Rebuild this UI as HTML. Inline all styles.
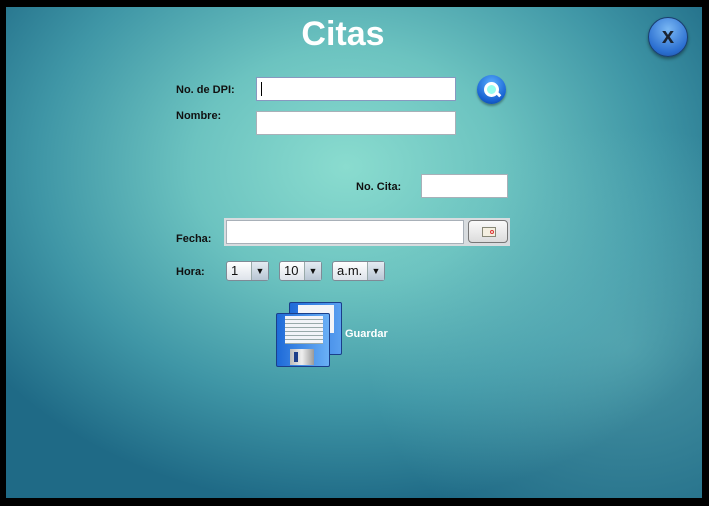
<!DOCTYPE html><html><head><style>
body{margin:0;width:709px;height:506px;background:#000;position:relative;overflow:hidden;font-family:"Liberation Sans",sans-serif}
#bg{position:absolute;left:6px;top:7px;width:696px;height:491px;background:radial-gradient(ellipse 440px 340px at 340px 160px,#8adccf 0%,#6cc3c0 35%,#3f96a6 70%,#1f6a86 100%),#1a5e7e;overflow:hidden}
#bg2{position:absolute;left:0;top:0;width:696px;height:491px;background:radial-gradient(ellipse 260px 220px at 620px 340px,rgba(120,200,200,.45),rgba(0,0,0,0));}
.l{position:absolute;font-size:11px;font-weight:bold;color:#111}
.in{position:absolute;background:#fff;border:1px solid #a8b0b8;box-sizing:border-box}
.cb{position:absolute;height:20px;border:1px solid #7f8a96;border-radius:3px;background:linear-gradient(#fff,#dde3ea);box-sizing:border-box;font-size:13px;line-height:18px;padding-left:4px;color:#111}
.cb i{position:absolute;right:0;top:0;width:16px;height:18px;border-left:1px solid #9aa;background:linear-gradient(#e4ebf2,#b8c6d4);font-style:normal;font-size:9px;text-align:center;line-height:18px}
</style></head><body>
<div id="bg"><div id="bg2"></div></div>
<div style="position:absolute;left:0;width:686px;top:15px;text-align:center;color:#fff;font-weight:bold;font-size:34px">Citas</div>
<div style="position:absolute;left:648px;top:17px;width:38px;height:38px;border-radius:50%;background:radial-gradient(circle at 50% 30%,#7ab8f4,#2a6ed0 70%,#1d4e9a);border:1px solid #1a3e70;box-shadow:0 2px 3px rgba(0,0,0,.4);text-align:center;line-height:36px;font-weight:bold;font-size:22px;color:#1a2330">x</div>
<div class="l" style="left:176px;top:84px">No. de DPI:</div>
<div class="in" style="left:256px;top:77px;width:200px;height:24px;border-color:#8898c0"><div style="position:absolute;left:4px;top:4px;width:1px;height:14px;background:#000"></div></div>
<div style="position:absolute;left:477px;top:75px;width:29px;height:29px;border-radius:50%;background:radial-gradient(circle at 50% 30%,#5ab0ff,#1660d0 70%,#0b3c8c);box-shadow:0 2px 2px rgba(0,0,0,.35)"><div style="position:absolute;left:7px;top:7px;width:9px;height:9px;border:3px solid #fff;border-radius:50%;background:#9fe"></div><div style="position:absolute;left:19px;top:18px;width:5px;height:3px;background:#fff;transform:rotate(45deg)"></div></div>
<div class="l" style="left:176px;top:110px">Nombre:</div>
<div class="in" style="left:256px;top:111px;width:200px;height:24px"></div>
<div class="l" style="left:356px;top:181px">No. Cita:</div>
<div class="in" style="left:421px;top:174px;width:87px;height:24px"></div>
<div style="position:absolute;left:224px;top:218px;width:286px;height:28px;background:#d8dcdf"></div>
<div class="in" style="left:226px;top:220px;width:238px;height:24px"></div>
<div style="position:absolute;left:468px;top:220px;width:40px;height:23px;border:1px solid #777;border-radius:4px;background:linear-gradient(#fafafa,#dcdcdc);box-sizing:border-box"><div style="position:absolute;left:13px;top:6px;width:12px;height:8px;border:1px solid #887;background:#f4efe0"><div style="position:absolute;right:1px;top:2px;width:4px;height:4px;border:1px solid #d33;border-radius:50%;box-sizing:border-box"></div></div></div>
<div class="l" style="left:176px;top:233px">Fecha:</div>
<div class="l" style="left:176px;top:266px">Hora:</div>
<div class="cb" style="left:226px;top:261px;width:43px">1<i>▼</i></div>
<div class="cb" style="left:279px;top:261px;width:43px">10<i>▼</i></div>
<div class="cb" style="left:332px;top:261px;width:53px">a.m.<i>▼</i></div>
<div style="position:absolute;left:289px;top:302px;width:51px;height:51px;background:linear-gradient(90deg,#1e6ad8,#5aa0f0);border:1px solid #1a3f8a;border-radius:2px"><div style="position:absolute;left:8px;top:2px;width:36px;height:28px;background:#f2f4f8"></div></div>
<div style="position:absolute;left:276px;top:313px;width:52px;height:52px;background:linear-gradient(90deg,#1e6ad8,#6ab0f6);border:1px solid #1a3f8a;border-radius:2px">
<div style="position:absolute;left:8px;top:2px;width:38px;height:28px;background:repeating-linear-gradient(#f2f4f8 0 3px,#9aa 3px 4px)"></div>
<div style="position:absolute;left:13px;top:35px;width:24px;height:16px;background:linear-gradient(90deg,#bbb,#eee,#999)"><div style="position:absolute;left:4px;top:3px;width:4px;height:10px;background:#1e3f8a"></div></div></div>
<div style="position:absolute;left:345px;top:328px;font-size:11px;font-weight:bold;color:#fff">Guardar</div>
</body></html>
